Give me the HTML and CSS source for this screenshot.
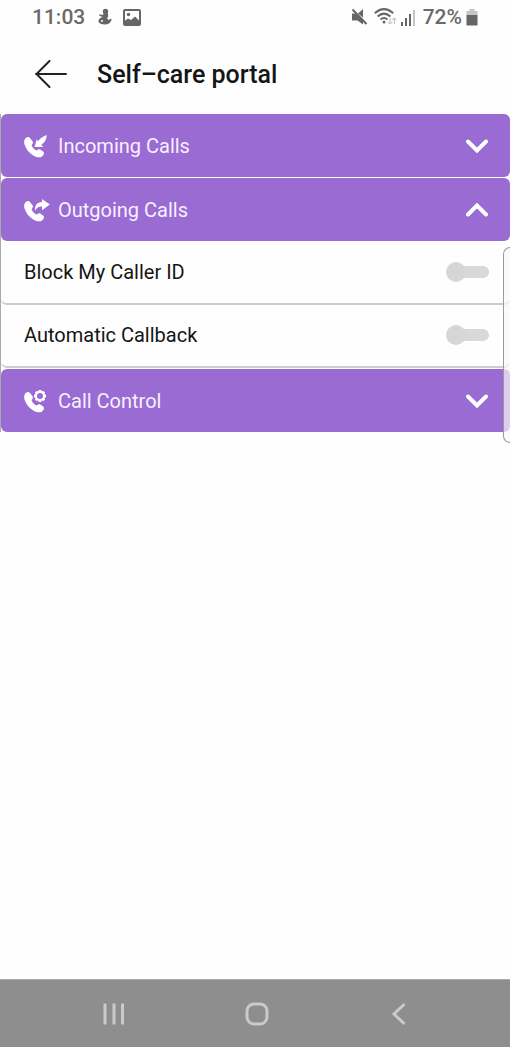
FILE: index.html
```html
<!DOCTYPE html>
<html lang="en">
<head>
<meta charset="utf-8">
<meta name="viewport" content="width=device-width, initial-scale=1">
<title>Self–care portal</title>
<link rel="stylesheet" href="styles.css">
</head>
<body>
<svg class="defs" aria-hidden="true">
  <symbol id="handset" viewBox="0 0 28 24">
    <path d="M1 4.800C2 3.300 4.300 2 5.800 3.700L8.500 7.300C9.400 8.600 8.800 9.600 7.500 11.200C8.500 13.500 10.300 15.500 12.800 16.600C14.200 15.200 15.400 14.900 16.600 15.700L19.400 17.800C20.800 19.300 19.400 21.500 18 22.500C16 23.900 13 23.500 10 21.900C5.500 19.400 2 15.600.5 10.500C-.1 8.300.1 6 1 4.800Z"/>
  </symbol>
  <symbol id="chevron" viewBox="0 0 22 14">
    <path d="M2 2.500L11 11.500L20 2.500"/>
  </symbol>
</svg>

<div class="status">
  <span class="clock">11:03</span>
  <svg class="figure" viewBox="0 0 14 18" aria-hidden="true">
    <circle cx="7.500" cy="3.500" r="2.700"/>
    <path d="M5.400 5.500L10 5.200L10.200 8.500L9 10L10.500 12L13.200 10.500L13.500 12C12.500 15 10 16.500 7 16.500C3.500 16.500 1 15.500.3 13.500L1.500 10.500L4.500 9L1.300 7.800L1.500 6.300L5 7Z"/>
    <circle class="figure-gap" cx="4" cy="13" r="1"/>
  </svg>
  <svg class="photo" viewBox="0 0 18 17" aria-hidden="true">
    <rect class="photo-frame" x="1" y="1" width="16" height="15" rx="1"/>
    <circle cx="5.500" cy="5.500" r="1.700"/>
    <path d="M1.500 12L5 9.500L8 11L12 7.500L16.500 12V16H1.500Z"/>
  </svg>
  <span class="spacer"></span>
  <svg class="mute" viewBox="0 0 17 18" aria-hidden="true">
    <path d="M1 5.500H5L12 12.500V16.500L6.500 12.500H1ZM7 5.500L12 1V9.500Z"/>
    <path class="mute-slash" d="M1.500 1.500L15.500 16"/>
  </svg>
  <svg class="wifi" viewBox="0 0 24 18" aria-hidden="true">
    <path class="arc" d="M.8 5.300Q10 -3 19.200 5.300M3.600 8.500Q10 2.800 16.400 8.500M6.500 11.500Q10 8.600 13.500 11.500"/>
    <circle cx="10" cy="14" r="1.500"/>
    <path class="traffic" d="M16 10V16M13.800 14L16 16.200L18.200 14M20.300 16V10M18.200 12L20.300 9.800L22.500 12"/>
  </svg>
  <svg class="signal" viewBox="0 0 16 17" aria-hidden="true">
    <path d="M1 13H3V17H1ZM5 9H7V17H5ZM9 5H11V17H9Z"/>
    <path class="pale" d="M13 1H15V17H13Z"/>
  </svg>
  <span class="charge">72%</span>
  <svg class="battery" viewBox="0 0 12 17" aria-hidden="true">
    <path class="pale" d="M3.500 0H8.500V2H11.500V7H.5V2H3.500Z"/>
    <path d="M.5 6H11.500V16.500H.5Z"/>
  </svg>
</div>

<header class="header">
  <button class="back" type="button" aria-label="Back">
    <svg viewBox="0 0 32 28" aria-hidden="true"><path d="M31 14H1M14.500 1L1.500 14L14.500 27"/></svg>
  </button>
  <h1 class="title">Self–care portal</h1>
</header>

<main class="main">
  <div class="list">
    <button class="group" type="button" aria-expanded="false">
      <svg class="call" viewBox="0 0 28 24" aria-hidden="true">
        <use href="#handset"/>
        <path d="M22.800 1C18.500 2.500 15.800 4.500 14.300 7.300L12.700 5.500L10.500 13L19.200 13L17.300 10.700C20.500 9 22.500 5.500 22.800 1Z"/>
      </svg>
      <span class="name">Incoming Calls</span>
      <svg class="chevron" aria-hidden="true"><use href="#chevron"/></svg>
    </button>
    <button class="group" type="button" aria-expanded="true">
      <svg class="call" viewBox="0 0 28 24" aria-hidden="true">
        <use href="#handset"/>
        <path d="M11 13C10.500 7.500 13 4 18 4V1L25.800 6.500L18 12.300V8.500C15 8.300 12.500 9.500 11 13Z"/>
      </svg>
      <span class="name">Outgoing Calls</span>
      <svg class="chevron up" aria-hidden="true"><use href="#chevron"/></svg>
    </button>
    <div class="options">
      <label class="option"><span class="name">Block My Caller ID</span><input class="switch" type="checkbox" role="switch"></label>
      <label class="option"><span class="name">Automatic Callback</span><input class="switch" type="checkbox" role="switch"></label>
    </div>
    <button class="group" type="button" aria-expanded="false">
      <svg class="call" viewBox="0 0 28 24" aria-hidden="true">
        <use href="#handset"/>
        <circle class="gear" cx="16" cy="7" r="4"/>
        <path class="teeth" d="M16 1V3M16 11V13M10 7H12M20 7H22M11.800 2.800L13.200 4.200M18.800 9.800L20.200 11.200M11.800 11.200L13.200 9.800M18.800 4.200L20.200 2.800"/>
      </svg>
      <span class="name">Call Control</span>
      <svg class="chevron" aria-hidden="true"><use href="#chevron"/></svg>
    </button>
    <div class="edge"></div>
  </div>
</main>

<nav class="nav" aria-label="System">
  <button class="key" type="button" aria-label="Recent apps">
    <svg viewBox="0 0 24 24" aria-hidden="true"><path d="M3 1.500V22.500M12 1.500V22.500M20.500 1.500V22.500"/></svg>
  </button>
  <button class="key" type="button" aria-label="Home">
    <svg viewBox="0 0 24 24" aria-hidden="true"><rect x="2" y="2" width="20" height="20" rx="7"/></svg>
  </button>
  <button class="key" type="button" aria-label="Back">
    <svg viewBox="0 0 24 24" aria-hidden="true"><path d="M17.500 2L7 12L17.500 22"/></svg>
  </button>
</nav>
</body>
</html>
```
FILE: styles.css
```css
* {
  box-sizing: border-box;
}

body {
  display: flex;
  flex-direction: column;
  min-height: 100vh;
  margin: 0;
  background: #fefefe;
  color: #151515;
  font-family: Roboto, "Liberation Sans", sans-serif;
}

button {
  margin: 0;
  padding: 0;
  border: 0;
  background: none;
  color: inherit;
  font: inherit;
}

svg {
  display: block;
  flex: none;
}

.defs {
  position: absolute;
  width: 0;
  height: 0;
}

/* Status bar */
.status {
  display: flex;
  align-items: center;
  height: 34px;
  padding: 0 32px;
  color: #6a6a6a;
  fill: #666;
  font-size: 21px;
  font-weight: 500;
  line-height: 34px;
}

.figure {
  width: 14px;
  height: 18px;
  margin-left: 13px;
}

.figure-gap {
  fill: #fefefe;
}

.photo {
  width: 18px;
  height: 17px;
  margin-left: 11px;
}

.photo-frame {
  fill: none;
  stroke: #666;
  stroke-width: 2;
}

.spacer {
  flex: 1;
}

.mute {
  width: 17px;
  height: 18px;
}

.mute-slash {
  stroke: #666;
  stroke-width: 2;
}

.wifi {
  width: 24px;
  height: 18px;
  margin-left: 6px;
}

.arc {
  fill: none;
  stroke: #666;
  stroke-width: 2;
}

.traffic {
  fill: none;
  stroke: #bbb;
  stroke-width: 1;
}

.signal {
  width: 16px;
  height: 17px;
  margin-left: 2px;
}

.pale {
  fill: #c4c4c4;
}

.charge {
  margin-left: 7px;
}

.battery {
  width: 12px;
  height: 17px;
  margin-left: 4px;
}

/* Page header */
.header {
  display: flex;
  align-items: center;
  gap: 30px;
  height: 80px;
  padding: 0 35px;
}

.back svg {
  width: 32px;
  height: 28px;
  fill: none;
  stroke: #222;
  stroke-width: 2;
  stroke-linecap: round;
}

.title {
  margin: 0;
  padding-top: 2px;
  font-size: 25px;
  font-weight: 500;
  line-height: 32px;
}

/* Call settings */
.main {
  flex: 1;
}

.list {
  position: relative;
  display: flex;
  flex-direction: column;
  gap: 1px;
  border-left: 1px solid #aaa;
}

.group {
  display: flex;
  align-items: center;
  height: 63px;
  padding: 0 22px 0 23px;
  border-radius: 6px;
  background: #996bd3;
  color: #f8f0ff;
  font-size: 20px;
  text-align: left;
}

.call {
  width: 28px;
  height: 24px;
  margin-right: 6px;
  fill: #fff;
}

.gear {
  fill: none;
  stroke: #fff;
  stroke-width: 2;
}

.teeth {
  stroke: #fff;
  stroke-width: 3;
}

.name {
  flex: 1;
}

.chevron {
  width: 22px;
  height: 14px;
  fill: none;
  stroke: #fff;
  stroke-width: 4;
  stroke-linecap: round;
}

.up {
  transform: rotate(180deg);
}

.option {
  display: flex;
  align-items: center;
  height: 63px;
  padding: 0 21px 1px 23px;
  border-bottom: 2px solid #ccc;
  border-radius: 6px;
  font-size: 20px;
}

.switch {
  appearance: none;
  display: flex;
  align-items: center;
  width: 43px;
  height: 20px;
  margin: 0;
  background: linear-gradient(#d9d9d9, #d9d9d9) 10px 4px / 27px 12px no-repeat,
    radial-gradient(circle at 37px 10px, #d9d9d9 6px, transparent 6px);
}

.switch::before {
  content: "";
  width: 20px;
  height: 20px;
  border-radius: 50%;
  background: #d6d6d6;
}

.switch:checked {
  transform: rotate(180deg);
}

/* Edge panel handle lying over the right side of the list */
.edge {
  position: absolute;
  top: 133px;
  right: 0;
  bottom: -11px;
  width: 7px;
  border: 1px solid #999;
  border-right: 0;
  border-radius: 7px 0 0 7px;
  background: rgba(248, 248, 248, 0.7);
}

/* System navigation */
.nav {
  display: flex;
  align-items: center;
  justify-content: space-between;
  height: 68px;
  padding: 0 99px 0 102px;
  border-top: 1px solid #aaa;
  background: #8e8e8e;
}

.key svg {
  width: 24px;
  height: 24px;
  fill: none;
  stroke: #cacaca;
  stroke-width: 3;
}
```
